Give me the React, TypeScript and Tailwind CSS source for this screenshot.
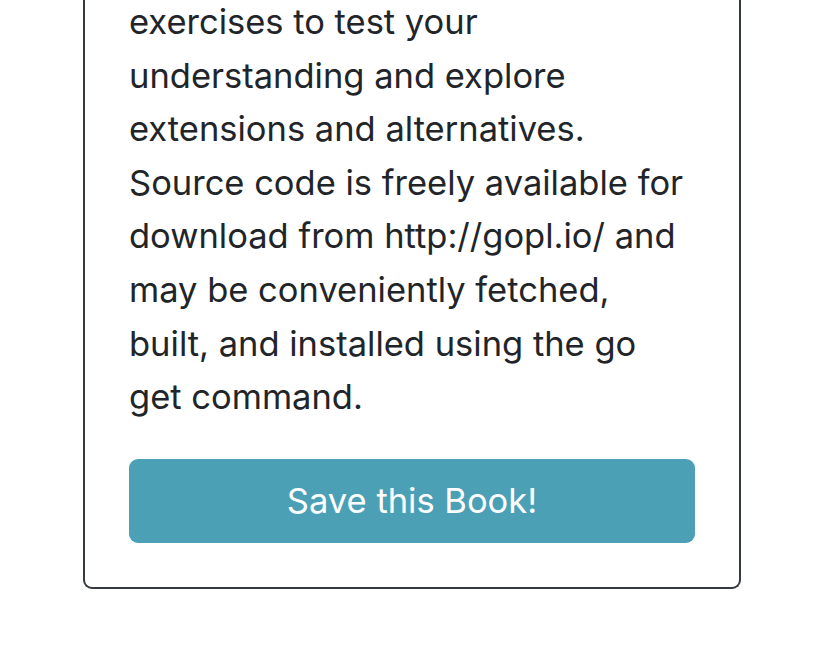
export default function App() {
  const lines = [
    "exercises to test your",
    "understanding and explore",
    "extensions and alternatives.",
    "Source code is freely available for",
    "download from http://gopl.io/ and",
    "may be conveniently fetched,",
    "built, and installed using the go",
    "get command.",
  ];
  return (
    <div className="min-h-[648px] bg-white overflow-hidden" style={{ fontFamily: "Inter, 'Noto Sans', sans-serif" }}>
      <div className="mx-auto mt-[-20px] w-[658px] rounded-b-[9px] border-[2px] border-t-0 border-[#343a40] px-[44px] pt-[15px] pb-[44px]">
        <p className="mb-[35px] text-[34.5px] leading-[53.6px] text-[#212529]">
          {lines.map((l) => (
            <span key={l} className="block whitespace-nowrap">{l}</span>
          ))}
        </p>
        <button className="flex h-[84px] w-full items-center justify-center rounded-[9px] bg-[#4ba0b6] text-[34.5px] text-white">
          Save this Book!
        </button>
      </div>
    </div>
  );
}
